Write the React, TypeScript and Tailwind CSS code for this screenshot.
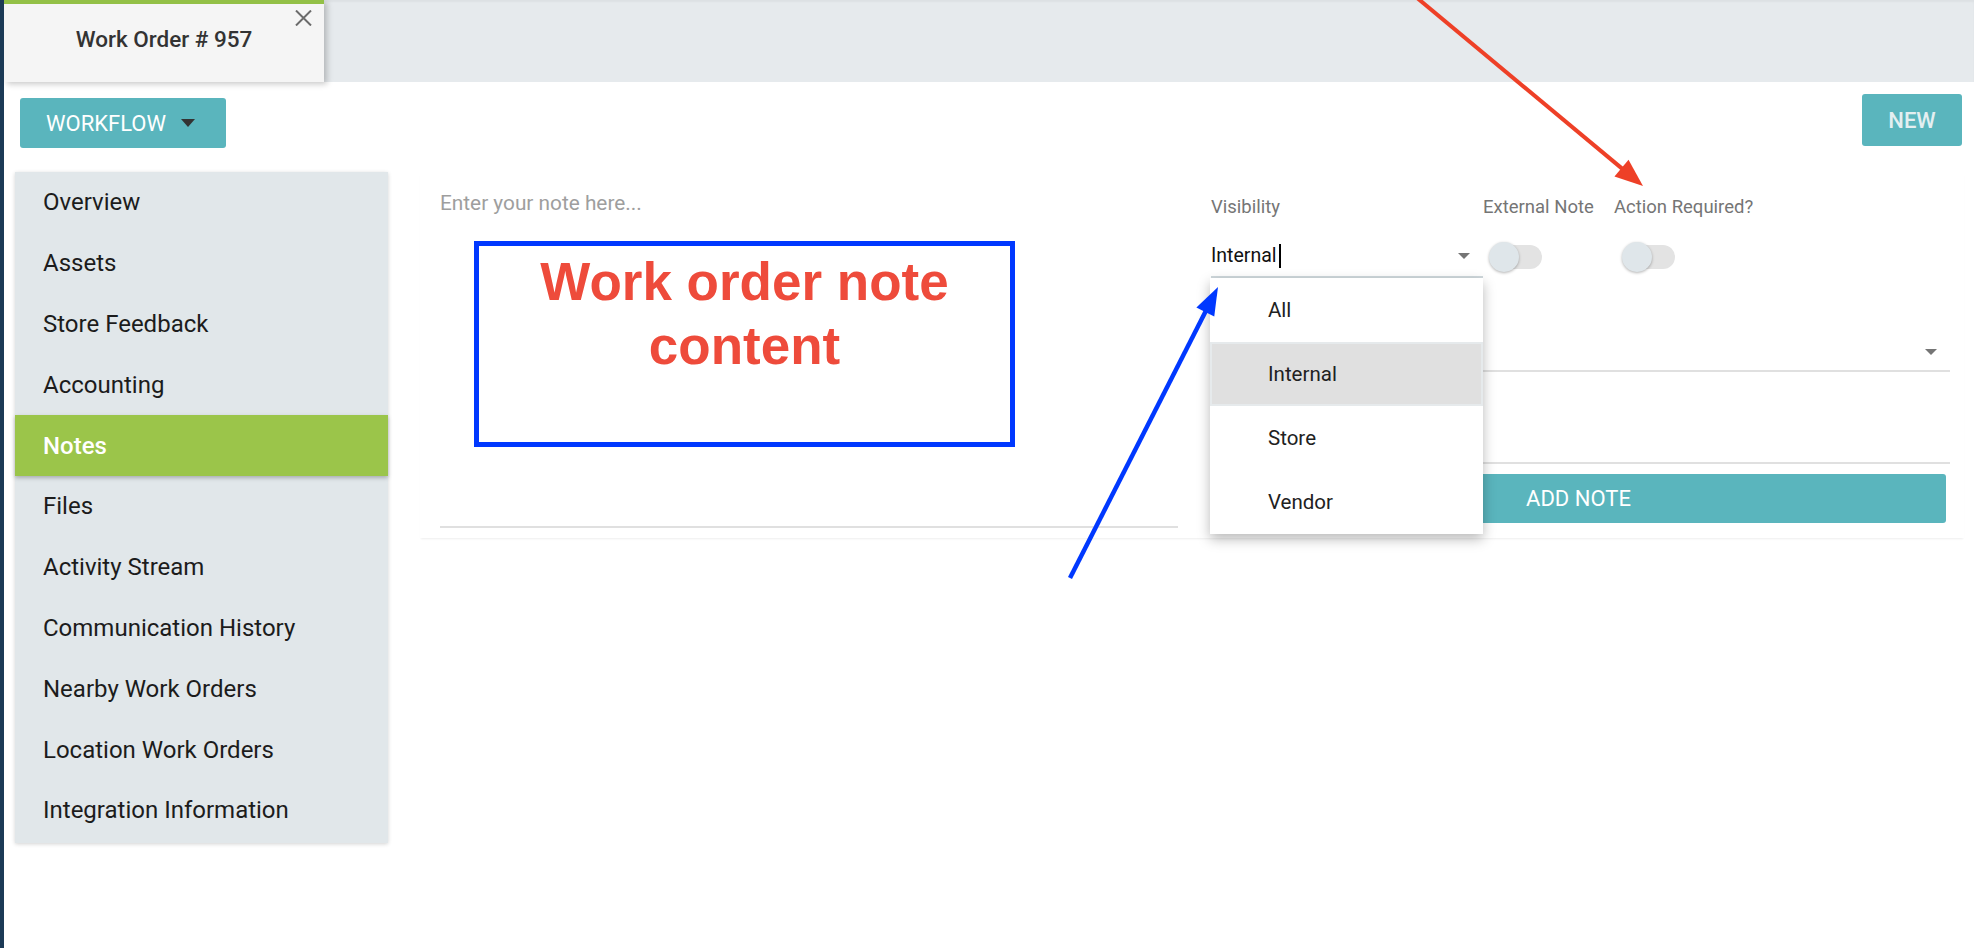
import React from "react";

const NAV_ITEMS = [
  "Overview",
  "Assets",
  "Store Feedback",
  "Accounting",
  "Notes",
  "Files",
  "Activity Stream",
  "Communication History",
  "Nearby Work Orders",
  "Location Work Orders",
  "Integration Information",
];

const VISIBILITY_OPTIONS = ["All", "Internal", "Store", "Vendor"];

type ArrowProps = {
  x1: number;
  y1: number;
  x2: number;
  y2: number;
  color: string;
  width: number;
  len: number;
  half: number;
};

// Straight callout arrow: a shaft plus a filled triangular head at (x2, y2).
function Arrow({ x1, y1, x2, y2, color, width, len, half }: ArrowProps) {
  const dx = x2 - x1;
  const dy = y2 - y1;
  const d = Math.hypot(dx, dy);
  const ux = dx / d;
  const uy = dy / d;
  const nx = -uy;
  const ny = ux;
  const bx = x2 - ux * len;
  const by = y2 - uy * len;
  return (
    <g>
      <line x1={x1} y1={y1} x2={bx + ux * 2} y2={by + uy * 2} stroke={color} strokeWidth={width} />
      <polygon
        points={`${x2},${y2} ${bx + nx * half},${by + ny * half} ${bx - nx * half},${by - ny * half}`}
        fill={color}
      />
    </g>
  );
}

function Caret({ color, w = 12, h = 6 }: { color: string; w?: number; h?: number }) {
  return (
    <svg width={w} height={h} viewBox={`0 0 ${w} ${h}`} className="block">
      <polygon points={`0,0 ${w},0 ${w / 2},${h}`} fill={color} />
    </svg>
  );
}

function Toggle() {
  return (
    <div className="relative w-[54px] h-[30px]">
      <div className="absolute left-[5px] top-[3px] w-[48px] h-[24px] rounded-full bg-[#e3e3e3]" />
      <div className="absolute left-0 top-0 w-[30px] h-[30px] rounded-full bg-[#dfe6ea] shadow-[0_1px_3px_rgba(0,0,0,0.3)]" />
    </div>
  );
}

export default function App() {
  return (
    <div className="relative w-[1974px] h-[948px] overflow-hidden bg-white border-l-4 border-[#1c3a56] font-[family-name:Roboto,sans-serif]">
      {/* tab strip */}
      <header className="h-[82px] bg-[#e6eaed] flex shadow-[inset_0_2px_2px_rgba(0,0,0,0.04)]">
        <div className="relative w-[320px] h-[82px] bg-[#f5f5f5] border-t-4 border-[#93c047] shadow-[3px_2px_6px_rgba(0,0,0,0.22)] flex items-center justify-center pb-[6px]">
          <span className="text-[22.5px] font-medium text-[#333333]">Work Order # 957</span>
          <svg
            className="absolute top-[6px] right-[12px]"
            width="17"
            height="16"
            viewBox="0 0 17 16"
          >
            <path d="M1 0.5 L16 15.5 M16 0.5 L1 15.5" stroke="#6b6b6b" strokeWidth="2" />
          </svg>
        </div>
      </header>

      {/* action bar */}
      <div className="flex justify-between items-start pt-[12px] pl-[16px] pr-[12px]">
        <button className="mt-[4px] flex items-center w-[206px] h-[50px] pl-[26px] rounded-[3px] bg-[#5ab5bd] text-white text-[22px]">
          <span>WORKFLOW</span>
          <span className="ml-[15px]">
            <Caret color="#333333" w={14} h={8} />
          </span>
        </button>
        <button className="w-[100px] h-[52px] rounded-[3px] bg-[#5ab5bd] text-[#e4eff1] text-[22px] font-medium flex items-center justify-center">
          NEW
        </button>
      </div>

      {/* body */}
      <div className="flex mt-[24px] pl-[11px]">
        <nav className="w-[373px] pb-[2px] bg-[#e1e7ea] shadow-[0_1px_4px_rgba(0,0,0,0.18)]">
          {NAV_ITEMS.map((item) =>
            item === "Notes" ? (
              <div
                key={item}
                className="relative h-[60.8px] flex items-center pl-[28px] text-[24px] font-medium text-white bg-[#9bc54a] shadow-[0_2px_4px_rgba(0,0,0,0.25)]"
              >
                {item}
              </div>
            ) : (
              <div key={item} className="h-[60.8px] flex items-center pl-[28px] text-[24px] text-[#1c1c1c]">
                {item}
              </div>
            )
          )}
        </nav>

        <section className="ml-[32px] w-[1544px] h-[366px] bg-white shadow-[0_2px_2px_-1px_rgba(0,0,0,0.07)] flex gap-[33px] pl-[20px]">
          {/* note editor */}
          <div className="relative w-[738px] h-[356px] pt-[19px] border-b-2 border-[#e0e0e0]">
            <div className="text-[20.8px] leading-[24px] text-[#9e9e9e]">Enter your note here...</div>
            <div className="absolute left-[34px] top-[69px] w-[541px] h-[206px] border-[5px] border-[#0038ff] pt-[4px] text-center text-[53px] leading-[64px] font-bold text-[#ee4b3b] font-[family-name:Liberation_Sans,Arial,sans-serif]">
              Work order note
              <br />
              content
            </div>
          </div>

          {/* note options */}
          <div className="w-[739px] pt-[24px] flex flex-col">
            <div className="flex h-[24px] items-center text-[18.5px] text-[#757575]">
              <div className="w-[272px]">Visibility</div>
              <div className="w-[131px]">External Note</div>
              <div>Action Required?</div>
            </div>

            <div className="flex mt-[16px] h-[42px]">
              <div className="relative w-[272px] h-[42px] border-b-2 border-[#cfd8dc] flex items-center justify-between pr-[13px]">
                <div className="flex items-center text-[19.5px] text-[#111111]">
                  <span>Internal</span>
                  <span className="inline-block w-[2px] h-[24px] bg-black ml-[2px]" />
                </div>
                <Caret color="#757575" />

                <div className="absolute left-[-1px] top-[42px] z-10 w-[273px] bg-white shadow-[0_5px_12px_rgba(0,0,0,0.28)]">
                  {VISIBILITY_OPTIONS.map((opt) => (
                    <div
                      key={opt}
                      className={
                        opt === "Internal"
                          ? "h-[64px] flex items-center pl-[56px] text-[20.5px] text-[#212121] bg-[#e0e0e0] border-2 border-[#e6eaec]"
                          : "h-[64px] flex items-center pl-[58px] text-[20.5px] text-[#212121]"
                      }
                    >
                      {opt}
                    </div>
                  ))}
                </div>
              </div>
              <div className="w-[131px] pl-[6px] flex items-center">
                <Toggle />
              </div>
              <div className="pl-[8px] flex items-center">
                <Toggle />
              </div>
            </div>

            <div className="h-[94px] border-b-2 border-[#e0e0e0] flex items-end justify-end pr-[13px] pb-[15px]">
              <Caret color="#757575" />
            </div>

            <div className="h-[92px] border-b-2 border-[#e0e0e0]" />

            <button className="mt-[10px] h-[49px] w-[735px] rounded-[3px] bg-[#5ab5bd] text-white text-[22px] flex items-center justify-center">
              ADD NOTE
            </button>
          </div>
        </section>
      </div>

      {/* callout arrows */}
      <svg
        className="absolute top-0 left-[-4px] pointer-events-none z-20"
        width="1974"
        height="948"
        viewBox="0 0 1974 948"
      >
        <Arrow x1={1416} y1={-3} x2={1643} y2={186} color="#ee4027" width={4} len={28} half={11} />
        <Arrow x1={1070} y1={578} x2={1218} y2={287} color="#0038ff" width={4.5} len={28} half={10} />
      </svg>
    </div>
  );
}
